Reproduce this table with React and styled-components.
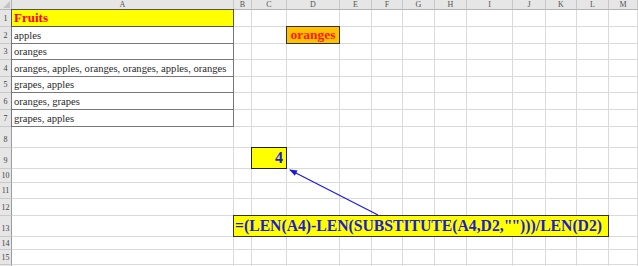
import React from 'react'
import styled, { createGlobalStyle } from 'styled-components'

const GlobalStyle = createGlobalStyle`
  html, body {
    margin: 0;
    padding: 0;
    background: #ffffff;
    overflow: hidden;
  }
`

const colWidths = [12, 222, 18, 35, 53, 32, 31, 32, 32, 46, 33, 31, 32, 29]
const rowHeights = [10, 17, 17, 16, 17, 16, 17, 17, 21, 21, 14, 16, 17, 21, 13, 15, 10]
const letters = ['A', 'B', 'C', 'D', 'E', 'F', 'G', 'H', 'I', 'J', 'K', 'L', 'M']

const fruits = [
  'apples',
  'oranges',
  'oranges, apples, oranges, oranges, apples, oranges',
  'grapes, apples',
  'oranges, grapes',
  'grapes, apples',
]

const Wrap = styled.div`
  position: relative;
  width: 638px;
  height: 266px;
  overflow: hidden;
`

const Sheet = styled.div`
  display: grid;
  grid-template-columns: ${colWidths.map(w => w + 'px').join(' ')};
  grid-template-rows: ${rowHeights.map(h => h + 'px').join(' ')};
  font-family: "Liberation Serif", "Times New Roman", serif;
`

const Cell = styled.div`
  grid-row: ${p => p.$row};
  grid-column: ${p => p.$col};
  box-sizing: border-box;
  border-right: 1px solid #dadada;
  border-bottom: 1px solid #dadada;
`

const Corner = styled.div`
  grid-row: 1;
  grid-column: 1;
  box-sizing: border-box;
  background: #e6e6e6;
  border-right: 1px solid #b4b4b4;
  border-bottom: 1px solid #b4b4b4;
  position: relative;
  &::after {
    content: '';
    position: absolute;
    right: 1px;
    bottom: 1px;
    border-left: 7px solid transparent;
    border-bottom: 7px solid #c4c4c4;
  }
`

const ColHeader = styled.div`
  grid-row: 1;
  grid-column: ${p => p.$col};
  box-sizing: border-box;
  background: #e6e6e6;
  border-right: 1px solid #c6c6c6;
  border-bottom: 1px solid #b4b4b4;
  color: #555;
  font-size: 8px;
  line-height: 9px;
  text-align: center;
`

const RowHeader = styled.div`
  grid-row: ${p => p.$row};
  grid-column: 1;
  box-sizing: border-box;
  background: #e6e6e6;
  border-right: 1px solid #9c9c9c;
  border-bottom: 1px solid #c9c9c9;
  color: #444;
  font-size: 8px;
  display: flex;
  align-items: ${p => (p.$tall ? 'flex-end' : 'center')};
  justify-content: center;
  padding-bottom: ${p => (p.$tall ? '3px' : '0')};
  overflow: hidden;
`

const Boxed = styled.div`
  grid-row: ${p => p.$row};
  grid-column: ${p => p.$col} / span ${p => p.$span || 1};
  margin: -1px 0 0 -1px;
  box-sizing: border-box;
  border: 1px solid ${p => p.$edge || '#777'};
  z-index: 1;
  display: flex;
  align-items: center;
  white-space: nowrap;
  overflow: hidden;
`

const ListCell = styled(Boxed)`
  background: #ffffff;
  border-top: none;
  margin-top: 0;
  color: #2a2a2a;
  font-size: 10.6px;
  padding-left: 2px;
`

const TitleCell = styled(Boxed)`
  background: #ffff00;
  border-color: #555;
  color: #ff0000;
  font-weight: bold;
  font-size: 13px;
  padding-left: 2px;
`

const LookupCell = styled(Boxed)`
  background: #ffc000;
  border-color: #333;
  color: #ff1a00;
  font-weight: bold;
  font-size: 13.5px;
  justify-content: center;
`

const ResultCell = styled(Boxed)`
  background: #ffff00;
  border-color: #222;
  color: #1c1cd8;
  font-weight: bold;
  font-size: 16px;
  justify-content: flex-end;
  padding-right: 3px;
`

const FormulaCell = styled(Boxed)`
  background: #ffff00;
  border-color: #333;
  color: #1c1cd8;
  font-weight: bold;
  font-size: 15.7px;
  padding-left: 1px;
`

const Quotes = styled.span`
  letter-spacing: -1px;
  margin-right: 1px;
`

const Arrow = styled.svg`
  position: absolute;
  left: 0;
  top: 0;
  z-index: 2;
  pointer-events: none;
`

export default function App() {
  const gridCells = []
  for (let r = 2; r <= rowHeights.length; r++) {
    for (let c = 2; c <= colWidths.length; c++) {
      gridCells.push(<Cell key={`${r}-${c}`} $row={r} $col={c} />)
    }
  }

  return (
    <Wrap>
      <GlobalStyle />
      <Sheet>
        <Corner />
        {letters.map((l, i) => (
          <ColHeader key={l} $col={i + 2}>{l}</ColHeader>
        ))}
        {rowHeights.slice(1).map((h, i) => (
          <RowHeader key={i} $row={i + 2} $tall={h > 18}>
            {i < 15 ? i + 1 : ''}
          </RowHeader>
        ))}
        {gridCells}

        <TitleCell $row={2} $col={2}>Fruits</TitleCell>
        {fruits.map((f, i) => (
          <ListCell key={i} $row={i + 3} $col={2}>{f}</ListCell>
        ))}
        <LookupCell $row={3} $col={5}>oranges</LookupCell>
        <ResultCell $row={10} $col={4}>4</ResultCell>
        <FormulaCell $row={14} $col={3} $span={11}>
          =(LEN(A4)-LEN(SUBSTITUTE(A4,D2,<Quotes>&quot;&quot;</Quotes>)))/LEN(D2)
        </FormulaCell>
      </Sheet>

      <Arrow width="638" height="266" viewBox="0 0 638 266">
        <defs>
          <marker id="head" markerWidth="8" markerHeight="6" refX="7" refY="3" orient="auto" markerUnits="userSpaceOnUse">
            <path d="M0,0 L8,3 L0,6 Z" fill="#1a1ae6" />
          </marker>
        </defs>
        <line x1="378" y1="215" x2="290" y2="170" stroke="#1a1ae6" strokeWidth="1.2" markerEnd="url(#head)" />
      </Arrow>
    </Wrap>
  )
}
